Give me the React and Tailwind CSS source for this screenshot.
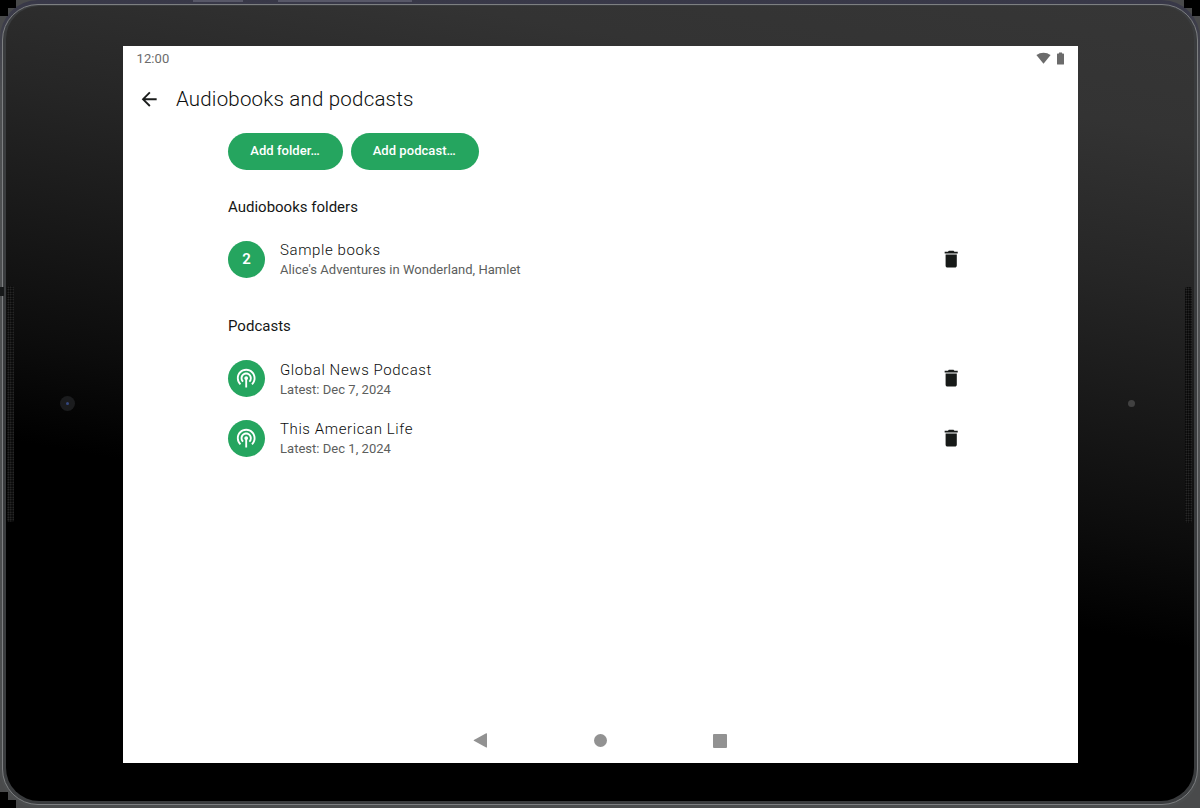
import React from "react";
import { MdPodcasts, MdDelete, MdArrowBack } from "react-icons/md";

function StatusBar() {
  return (
    <div className="flex h-[25px] items-center justify-between pl-[13.500px] pr-[14px] text-[#6b6b6b]">
      <span className="text-[13px] leading-4 tracking-[0.1px]">12:00</span>
      <div className="flex items-center gap-[6px] pb-px">
        <svg className="h-3 w-[15px]" viewBox="0 0 15 12" fill="currentColor">
          <path d="M.4 3.100C4.400-.2 10.600-.2 14.600 3.100L7.500 11.700Z" />
        </svg>
        <svg className="h-[13px] w-[7px]" viewBox="0 0 7 13" fill="currentColor">
          <path d="M2 .5H5V1.500H6.300Q7 1.500 7 2.200V12Q7 12.600 6.300 12.600H.7Q0 12.600 0 12V2.200Q0 1.500.7 1.500H2Z" />
        </svg>
      </div>
    </div>
  );
}

function PillButton({ children, className }) {
  return (
    <button className={`h-[37px] rounded-full bg-[#25a55f] pr-px text-[13px] font-medium tracking-[0.05px] text-white ${className}`}>
      {children}
    </button>
  );
}

function Row({ badge, title, subtitle }) {
  return (
    <div className="flex h-[59.700px] items-center">
      <div className="flex size-[37px] shrink-0 items-center justify-center rounded-full bg-[#25a55f] text-[15px] font-semibold text-white">
        {badge}
      </div>
      <div className="ml-[15px] flex-1 whitespace-nowrap pt-[2px]">
        <div className="text-[15px] font-light leading-5 tracking-[0.6px] text-[#0c0e0d]">{title}</div>
        <div className="text-[13px] leading-5 tracking-[0.03px] text-[#5c5e5d]">{subtitle}</div>
      </div>
      <MdDelete className="mr-[11px] size-[22.400px] text-[#171a18]" />
    </div>
  );
}

function NavBar() {
  return (
    <div className="flex h-[45px] items-center justify-center pr-px text-[#929292]">
      <svg className="mr-[105.500px] size-[15px]" viewBox="0 0 15 15" fill="currentColor">
        <path d="M.9 7.100 13.200.2Q14 0 14 .8V14Q14 14.800 13.200 14.500L.9 7.800Q.4 7.500.9 7.100Z" />
      </svg>
      <div className="mr-[105.500px] size-[13.500px] rounded-full bg-[#929292]" />
      <div className="size-[14px] rounded-[1px] bg-[#929292]" />
    </div>
  );
}

function Speaker({ className }) {
  return (
    <div
      className={`absolute h-[236px] w-[7px] rounded-[2px] bg-[radial-gradient(circle,#343434_0.6px,#080808_1px)] bg-[size:2.500px_2.500px] ${className}`}
    />
  );
}

export default function App() {
  return (
    <div className="relative h-[808px] w-[1200px] overflow-hidden bg-[#494a4b] font-['Roboto',sans-serif]">
      <div className="absolute left-0 top-0 h-2 w-4 bg-black" />
      <div className="absolute left-0 top-2 h-2 w-2 bg-black" />
      <div className="absolute right-0 top-0 h-2 w-4 bg-black" />
      <div className="absolute right-0 top-2 h-2 w-2 bg-black" />
      <div className="absolute bottom-0 left-0 h-4 w-2 bg-black" />
      <div className="absolute bottom-0 left-0 h-2 w-4 bg-black" />
      <div className="h-full rounded-[38px] bg-[linear-gradient(#383848,#4e5052_12%,#4b4d4e)] px-[2px] pb-[3px] pt-1">
        <div className="h-full rounded-[36px] border border-[#7d7f81] bg-[#3a3c3e] px-[3px] pb-[3px] pt-px">
          <div className="h-full rounded-[33px] bg-[linear-gradient(190deg,#363636_0%,#333333_13%,#262626_28%,#171717_43%,#0c0c0c_54%,#000000_64%)] pl-[117px] pt-10">
            <main className="flex h-[717px] w-[955px] flex-col bg-white">
              <StatusBar />
              <header className="flex h-[56px] items-center pl-[15px]">
                <MdArrowBack className="size-[22.400px] text-[#1b1d1c]" />
                <h1 className="ml-[15.500px] text-[20.500px] font-light leading-7 tracking-[0.2px] text-[#0c0e0d]">Audiobooks and podcasts</h1>
              </header>
              <div className="flex flex-1 flex-col px-[105px] pt-[5.500px]">
                <div className="flex gap-[7.500px]">
                  <PillButton className="w-[115px]">Add folder…</PillButton>
                  <PillButton className="w-[128.500px]">Add podcast…</PillButton>
                </div>
                <h2 className="mt-[27px] text-[15px] font-normal leading-5 text-[#151716]">Audiobooks folders</h2>
                <div className="mt-[13px]">
                  <Row badge="2" title="Sample books" subtitle="Alice's Adventures in Wonderland, Hamlet" />
                </div>
                <h2 className="mt-[27px] text-[15px] font-normal leading-5 text-[#151716]">Podcasts</h2>
                <div className="mt-[12.500px]">
                  <Row badge={<MdPodcasts className="size-[22.400px]" />} title="Global News Podcast" subtitle="Latest: Dec 7, 2024" />
                  <Row badge={<MdPodcasts className="size-[22.400px]" />} title="This American Life" subtitle="Latest: Dec 1, 2024" />
                </div>
              </div>
              <NavBar />
            </main>
          </div>
        </div>
      </div>
      <Speaker className="left-[7px] top-[286px]" />
      <Speaker className="right-[8px] top-[287px]" />
      <div className="absolute left-0 top-[287px] h-[9px] w-[4px] bg-[#17191a]" />
      <div className="absolute left-[193px] top-0 h-[2px] w-[50px] bg-[#585868]" />
      <div className="absolute left-[278px] top-0 h-[2px] w-[134px] bg-[#585868]" />
      <div className="absolute left-[60px] top-[396px] flex size-[15px] items-center justify-center rounded-full bg-[#1b1c1e]">
        <div className="size-[3px] rounded-full bg-[#34477e]" />
      </div>
      <div className="absolute left-[1128px] top-[400px] size-[7px] rounded-full bg-[#414141]" />
    </div>
  );
}
